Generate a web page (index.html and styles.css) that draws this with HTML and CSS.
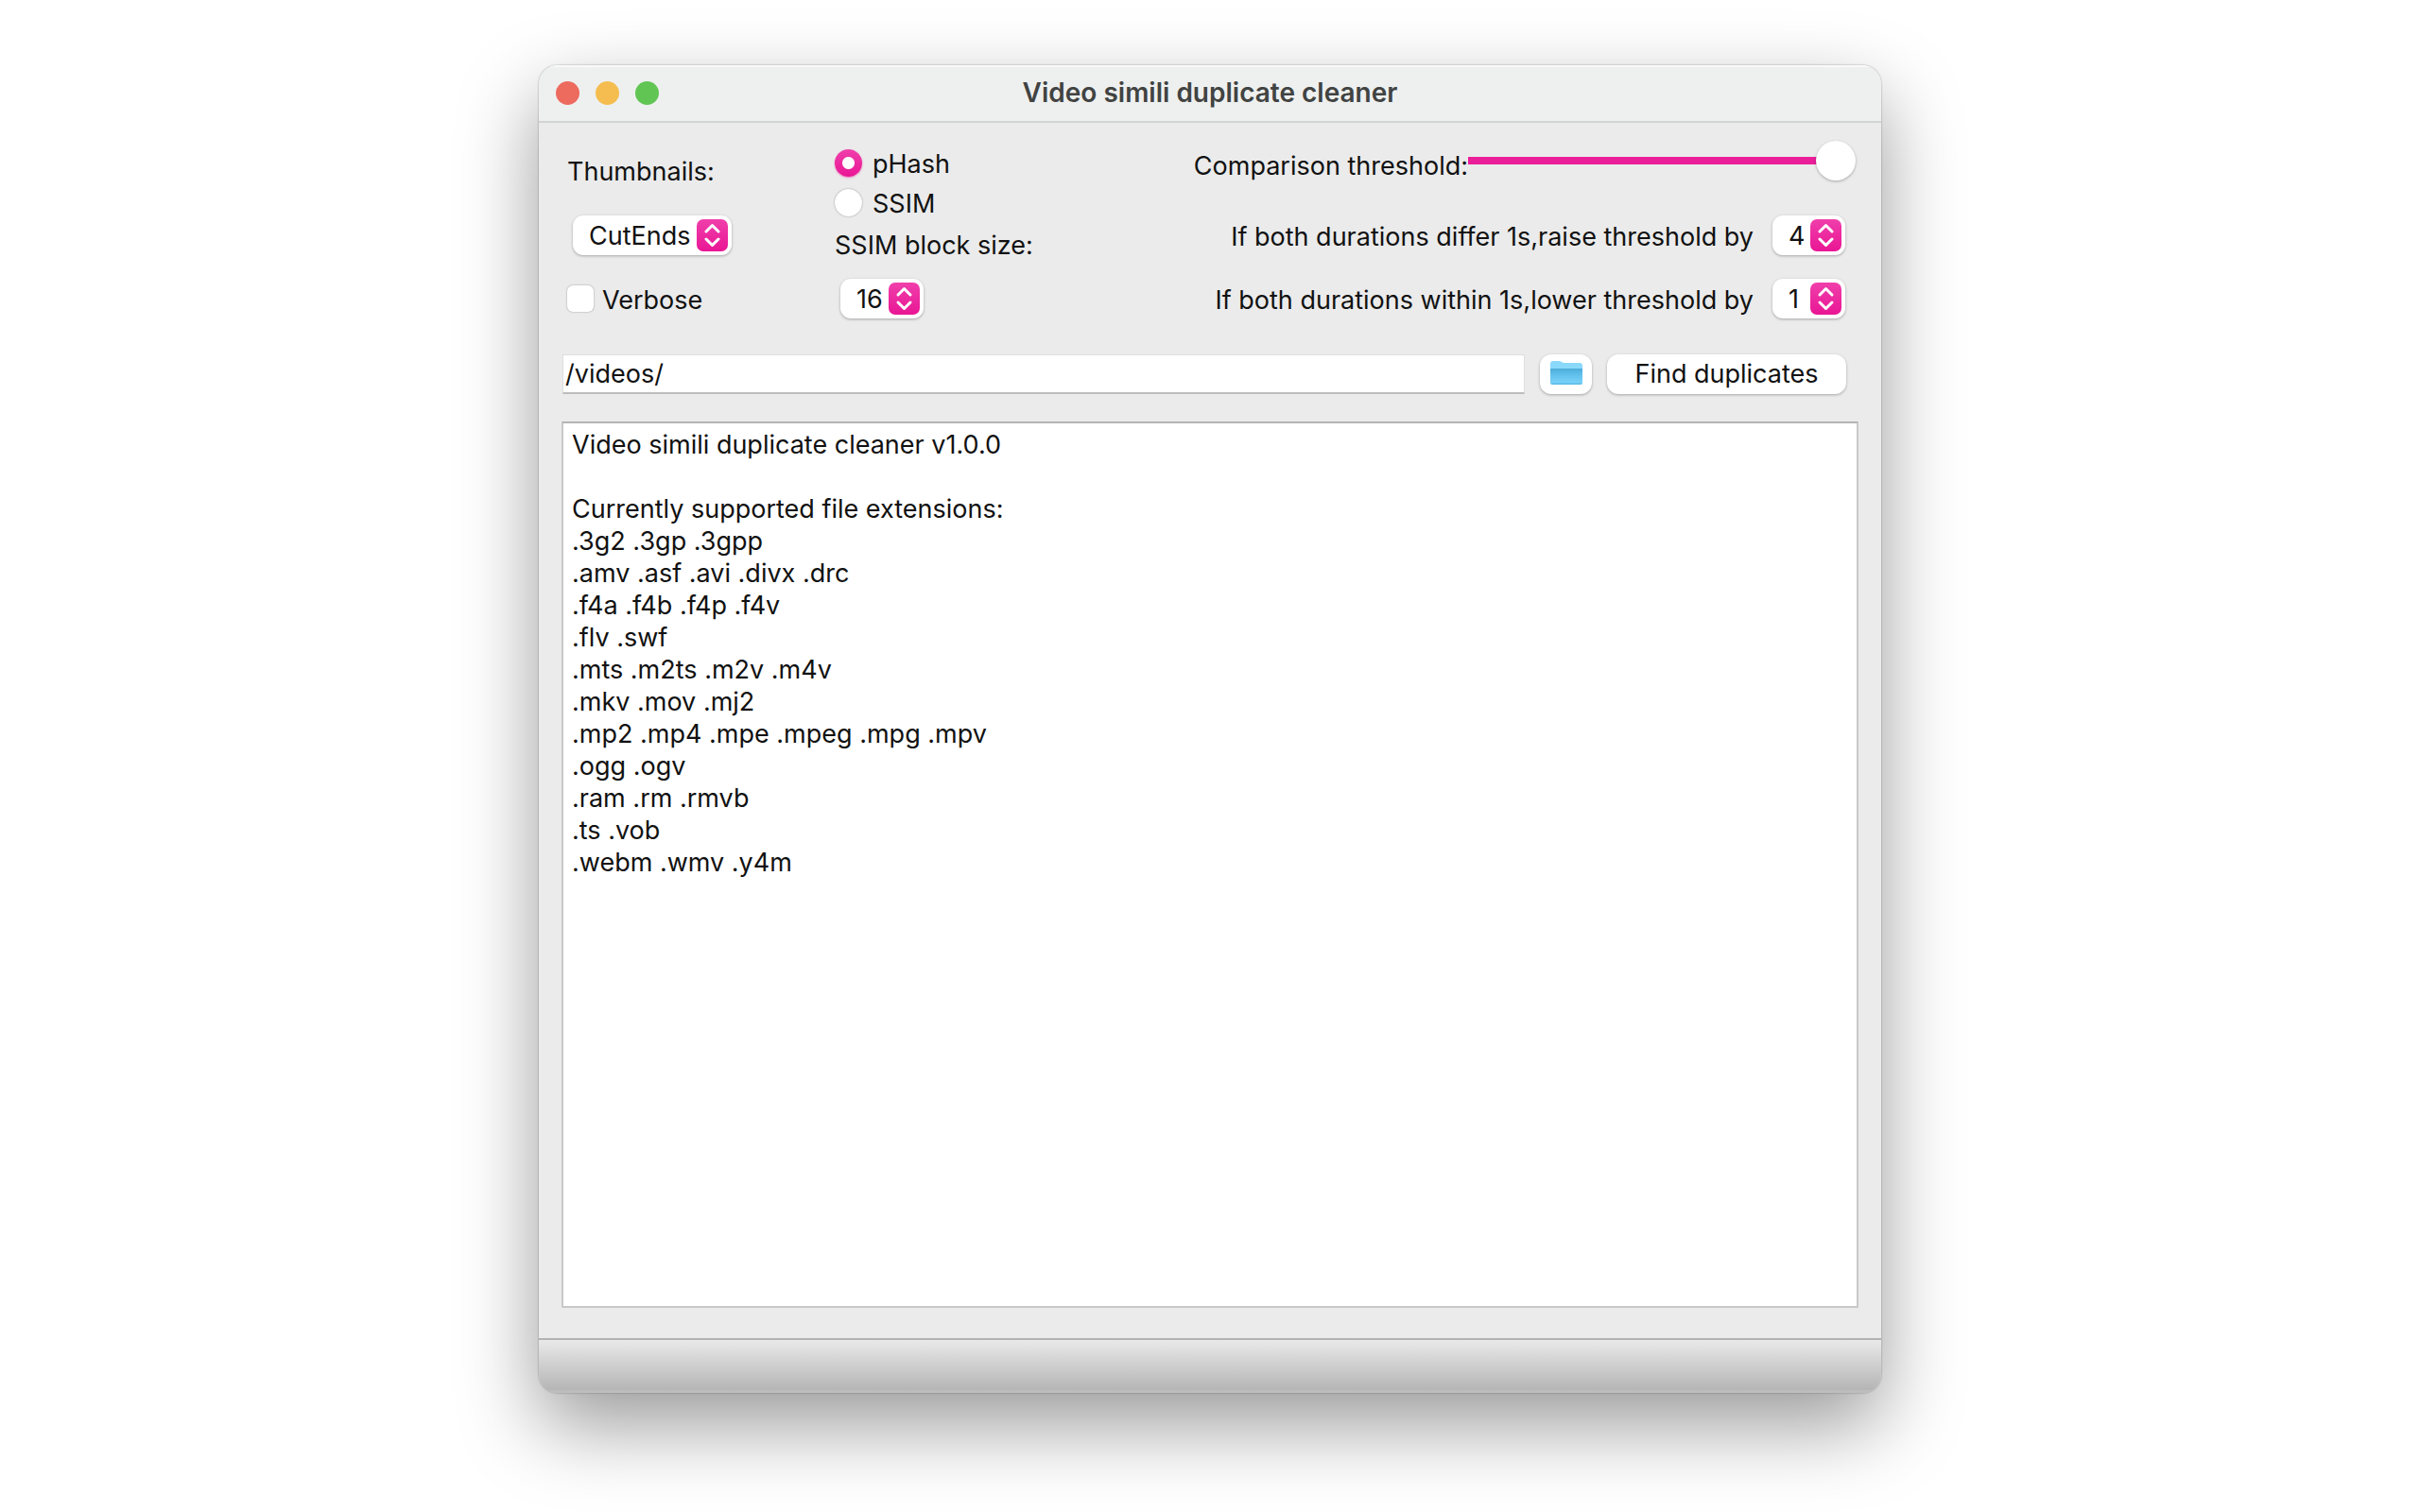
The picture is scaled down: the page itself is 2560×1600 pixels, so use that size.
FILE: index.html
```html
<!DOCTYPE html>
<html lang="en">
<head>
  <meta charset="UTF-8">
  <title>Video simili duplicate cleaner</title>
  <meta name="viewport" content="width=device-width, initial-scale=1.0">
  <link rel="stylesheet" href="styles.css">
</head>
<body>

<svg class="defs" width="0" height="0" aria-hidden="true">
  <defs>
    <linearGradient id="pink" x1="0" y1="0" x2="0" y2="1">
      <stop offset="0" stop-color="#f03fab"/>
      <stop offset="1" stop-color="#e91694"/>
    </linearGradient>
    <symbol id="arrows" viewBox="0 0 33 34">
      <rect width="33" height="34" rx="7" fill="url(#pink)"/>
      <path d="M10 13 L16.500 6.500 L23 13 M10 21 L16.500 27.500 L23 21" fill="none" stroke="#fff" stroke-width="3" stroke-linecap="round" stroke-linejoin="round"/>
    </symbol>
  </defs>
</svg>

<main class="window">
  <header class="titlebar">
    <div class="lights">
      <button type="button" class="light close" aria-label="Close"></button>
      <button type="button" class="light minimize" aria-label="Minimize"></button>
      <button type="button" class="light zoom" aria-label="Zoom"></button>
    </div>
    <h1>Video simili duplicate cleaner</h1>
  </header>

  <form class="content">
    <div class="settings">
      <div class="column">
        <label class="heading" for="thumbnails">Thumbnails:</label>
        <div class="popup popup-wide">
          <select id="thumbnails">
            <option>CutEnds</option>
          </select>
          <svg class="arrows"><use href="#arrows"/></svg>
        </div>
        <label class="check"><input type="checkbox" name="verbose"><span>Verbose</span></label>
      </div>

      <div class="column">
        <label class="radio"><input type="radio" name="method" checked><span>pHash</span></label>
        <label class="radio"><input type="radio" name="method"><span>SSIM</span></label>
        <label class="block-label" for="blocksize">SSIM block size:</label>
        <div class="popup popup-medium">
          <select id="blocksize">
            <option>16</option>
          </select>
          <svg class="arrows"><use href="#arrows"/></svg>
        </div>
      </div>

      <div class="column thresholds">
        <div class="slider-row">
          <label for="threshold">Comparison threshold:</label>
          <input type="range" id="threshold" min="0" max="100" value="100">
        </div>
        <div class="row">
          <label for="raise">If both durations differ 1s,raise threshold by</label>
          <div class="popup">
            <select id="raise">
              <option>4</option>
            </select>
            <svg class="arrows"><use href="#arrows"/></svg>
          </div>
        </div>
        <div class="row">
          <label for="lower">If both durations within 1s,lower threshold by</label>
          <div class="popup">
            <select id="lower">
              <option>1</option>
            </select>
            <svg class="arrows"><use href="#arrows"/></svg>
          </div>
        </div>
      </div>
    </div>

    <div class="search">
      <input type="text" class="path" value="/videos/" aria-label="Video folder">
      <button type="button" class="push browse" aria-label="Browse">
        <svg width="34" height="28" viewBox="0 0 34 28">
          <defs>
            <linearGradient id="folder" x1="0" y1="0" x2="0" y2="1">
              <stop offset="0" stop-color="#4cacd8"/>
              <stop offset="0.4" stop-color="#62c1ec"/>
              <stop offset="0.85" stop-color="#77d0f8"/>
              <stop offset="1" stop-color="#55b5df"/>
            </linearGradient>
          </defs>
          <path d="M0 12 V3 Q0 0 3 0 H9 Q11 0 12 1 Q13 2 15 2 H31 Q34 2 34 5 V12 Z" fill="#8ad9fb"/>
          <path d="M0 8 H34 V23 Q34 25 32 25 H2 Q0 25 0 23 Z" fill="url(#folder)"/>
        </svg>
      </button>
      <button type="button" class="push find">Find duplicates</button>
    </div>

    <textarea class="log" readonly spellcheck="false" aria-label="Log">Video simili duplicate cleaner v1.0.0

Currently supported file extensions:
.3g2 .3gp .3gpp
.amv .asf .avi .divx .drc
.f4a .f4b .f4p .f4v
.flv .swf
.mts .m2ts .m2v .m4v
.mkv .mov .mj2
.mp2 .mp4 .mpe .mpeg .mpg .mpv
.ogg .ogv
.ram .rm .rmvb
.ts .vob
.webm .wmv .y4m</textarea>
  </form>

  <footer class="statusbar"></footer>
</main>

</body>
</html>
```

FILE: styles.css
```css
* {
  margin: 0;
  padding: 0;
  box-sizing: border-box;
}

body {
  display: flex;
  justify-content: center;
  min-height: 100vh;
  padding: 69px 24px 126px;
  background: #fff;
  color: #111;
  font-family: Inter, "Liberation Sans", sans-serif;
  font-size: 27px;
  line-height: 34px;
}

input,
select,
button,
textarea {
  font: inherit;
  color: inherit;
  border: none;
  outline: none;
  appearance: none;
}

.defs {
  position: absolute;
}

.window {
  display: flex;
  flex-direction: column;
  width: 100%;
  max-width: 1420px;
  background: #ebebeb;
  border-radius: 20px;
  overflow: hidden;
  box-shadow: 0 0 2px rgba(0, 0, 0, 0.4), 0 34px 84px rgba(0, 0, 0, 0.4);
}

/* title bar */

.titlebar {
  display: grid;
  grid-template-columns: 1fr auto 1fr;
  align-items: center;
  height: 61px;
  padding: 0 18px;
  background: #eef0ef;
  border-bottom: 2px solid #d2d4d3;
  box-shadow: inset 0 2px #f8f9f8;
}

.titlebar h1 {
  padding-bottom: 2px;
  font-size: 28px;
  font-weight: 600;
  color: #414342;
}

.lights {
  display: flex;
  gap: 17px;
}

.light {
  width: 25px;
  height: 25px;
  border-radius: 50%;
}

.close {
  background: #ed6a5f;
}

.minimize {
  background: #f5bd4f;
}

.zoom {
  background: #61c554;
}

/* settings */

.content {
  flex: 1;
  display: flex;
  flex-direction: column;
  padding: 21px 24px 32px;
}

.settings {
  display: grid;
  grid-template-columns: 283px auto 1fr;
  padding: 0 3px 0 6px;
}

.column {
  display: flex;
  flex-direction: column;
  align-items: flex-start;
}

.heading {
  height: 77px;
  padding-top: 14px;
}

.check {
  display: flex;
  align-items: center;
  gap: 9px;
  height: 42px;
  margin-top: 25px;
}

.check input {
  width: 28px;
  height: 28px;
  background: #fff;
  border-radius: 6px;
  box-shadow: 0 0 2px rgba(0, 0, 0, 0.4);
}

.check input:checked {
  background: #ea1e98;
}

.check span,
.radio span,
.row label {
  padding-top: 4px;
}

.radio {
  display: flex;
  align-items: center;
  gap: 11px;
  height: 42px;
}

.radio input {
  width: 29px;
  height: 29px;
  background: #fff;
  border-radius: 50%;
  box-shadow: 0 0 2px rgba(0, 0, 0, 0.4);
}

.radio input:checked {
  background: radial-gradient(circle, #fff 6px, transparent 7px), linear-gradient(#f03fab, #e91694);
  box-shadow: 0 1px 2px rgba(233, 22, 148, 0.5);
}

.block-label {
  height: 60px;
  padding-top: 8px;
}

.popup {
  position: relative;
  width: 77px;
  height: 42px;
}

.popup select {
  width: 100%;
  height: 42px;
  padding: 1px 0 0 17px;
  background: #fff;
  border-radius: 11px;
  box-shadow: 0 1px 3px rgba(0, 0, 0, 0.3);
}

.popup-wide {
  width: 168px;
  margin-left: 6px;
}

.popup-medium {
  width: 88px;
  margin-left: 6px;
}

.arrows {
  position: absolute;
  top: 4px;
  right: 4px;
  width: 33px;
  height: 34px;
  pointer-events: none;
}

.thresholds {
  align-items: flex-end;
}

.slider-row {
  display: flex;
  height: 77px;
}

.slider-row label {
  padding-top: 8px;
}

.slider-row input {
  width: 410px;
  height: 38px;
  background: linear-gradient(#ea1e98, #ea1e98) left center / calc(100% - 20px) 8px no-repeat;
  border-radius: 4px;
}

.slider-row input::-webkit-slider-thumb {
  appearance: none;
  width: 42px;
  height: 42px;
  background: #fff;
  border-radius: 50%;
  box-shadow: 0 1px 3px rgba(0, 0, 0, 0.3);
}

.row {
  display: flex;
  align-items: center;
  gap: 20px;
  margin-right: 11px;
}

.row + .row {
  margin-top: 25px;
}

/* path and buttons */

.search {
  display: flex;
  align-items: center;
  margin: 38px 13px 29px 1px;
}

.path {
  flex: 1;
  min-width: 0;
  height: 42px;
  padding: 0 2px;
  background: #fff;
  border: 1px solid #dedede;
  border-bottom: 2px solid #bdbdbd;
}

.push {
  display: flex;
  align-items: center;
  justify-content: center;
  height: 42px;
  margin-left: 16px;
  background: #fff;
  border-radius: 12px;
  box-shadow: 0 1px 3px rgba(0, 0, 0, 0.3);
}

.browse {
  width: 55px;
}

.find {
  width: 253px;
}

.log {
  flex: 1;
  width: 100%;
  padding: 6px 9px;
  background: #fff;
  border: 2px solid #c8c8c8;
  border-top-color: #b4b4b4;
  resize: none;
}

.statusbar {
  height: 58px;
  background: linear-gradient(#e9e9e9, #b2b2b2);
  border-top: 2px solid #b1b3b2;
  box-shadow: inset 0 -3px #bdbdbd;
}
```
